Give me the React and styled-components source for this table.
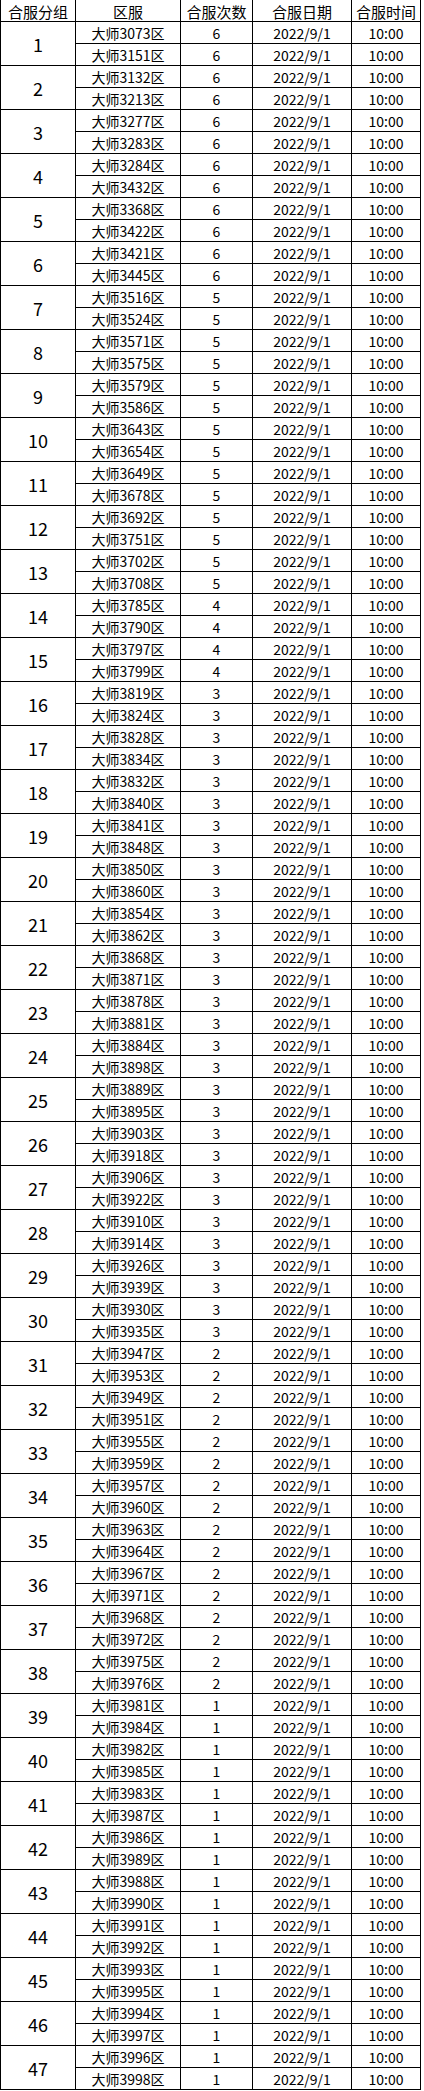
import React from 'react';
import styled, { createGlobalStyle } from 'styled-components';

const GlobalStyle = createGlobalStyle`
  html, body {
    margin: 0;
    padding: 0;
    background: #fff;
  }
  body {
    font-family: "Noto Sans CJK SC", "Noto Sans", sans-serif;
    color: #000;
  }
`;

// each group: [server a, server b, merge count]
const groups = [
  ['3073', '3151', 6], ['3132', '3213', 6], ['3277', '3283', 6], ['3284', '3432', 6],
  ['3368', '3422', 6], ['3421', '3445', 6], ['3516', '3524', 5], ['3571', '3575', 5],
  ['3579', '3586', 5], ['3643', '3654', 5], ['3649', '3678', 5], ['3692', '3751', 5],
  ['3702', '3708', 5], ['3785', '3790', 4], ['3797', '3799', 4], ['3819', '3824', 3],
  ['3828', '3834', 3], ['3832', '3840', 3], ['3841', '3848', 3], ['3850', '3860', 3],
  ['3854', '3862', 3], ['3868', '3871', 3], ['3878', '3881', 3], ['3884', '3898', 3],
  ['3889', '3895', 3], ['3903', '3918', 3], ['3906', '3922', 3], ['3910', '3914', 3],
  ['3926', '3939', 3], ['3930', '3935', 3], ['3947', '3953', 2], ['3949', '3951', 2],
  ['3955', '3959', 2], ['3957', '3960', 2], ['3963', '3964', 2], ['3967', '3971', 2],
  ['3968', '3972', 2], ['3975', '3976', 2], ['3981', '3984', 1], ['3982', '3985', 1],
  ['3983', '3987', 1], ['3986', '3989', 1], ['3988', '3990', 1], ['3991', '3992', 1],
  ['3993', '3995', 1], ['3994', '3997', 1], ['3996', '3998', 1],
];

const headers = ['合服分组', '区服', '合服次数', '合服日期', '合服时间'];

const Sheet = styled.div`
  display: grid;
  grid-template-columns: 74px 104px 71px 98px 68px;
  grid-auto-rows: 21px;
  gap: 1px;
  padding: 0 1px 1px 1px;
  background: #000;
  width: max-content;
`;

const Cell = styled.div`
  display: flex;
  align-items: center;
  justify-content: center;
  background: #fff;
  font-size: 14px;
  line-height: 1;
  white-space: nowrap;
  padding-top: 1px;
`;

const HeadCell = styled(Cell)`
  font-size: 15px;
  padding-top: 2px;
`;

const GroupCell = styled(Cell)`
  grid-row: span 2;
  font-size: 18px;
`;

export default function App() {
  return (
    <>
      <GlobalStyle />
      <Sheet>
        {headers.map((h) => (
          <HeadCell key={h}>{h}</HeadCell>
        ))}
        {groups.map(([a, b, n], i) => (
          <React.Fragment key={a}>
            <GroupCell>{i + 1}</GroupCell>
            {[a, b].map((s) => (
              <React.Fragment key={s}>
                <Cell>大师{s}区</Cell>
                <Cell>{n}</Cell>
                <Cell>2022/9/1</Cell>
                <Cell>10:00</Cell>
              </React.Fragment>
            ))}
          </React.Fragment>
        ))}
      </Sheet>
    </>
  );
}
